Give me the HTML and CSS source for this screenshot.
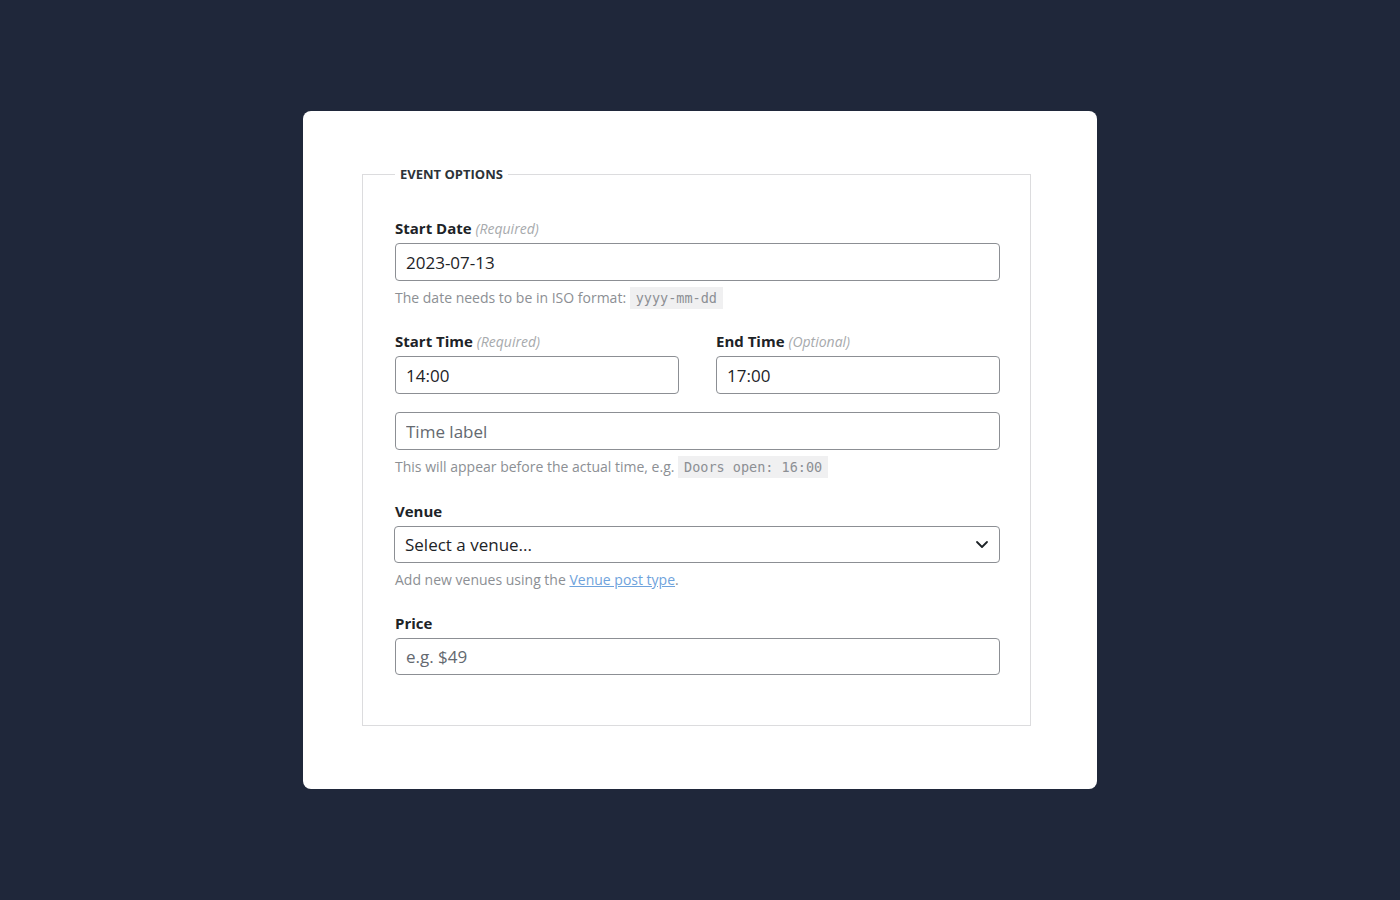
FILE: index.html
```html
<!DOCTYPE html>
<html lang="en">
<head>
  <meta charset="UTF-8">
  <title>Event Options</title>
  <link rel="stylesheet" href="styles.css">
</head>
<body>
  <div class="card">
    <fieldset class="options">
      <legend>Event Options</legend>

      <div class="field">
        <label for="startDate">Start Date <em>(Required)</em></label>
        <input type="text" id="startDate" value="2023-07-13">
        <p class="help">The date needs to be in ISO format: <code>yyyy-mm-dd</code></p>
      </div>

      <div class="row">
        <div class="field">
          <label for="startTime">Start Time <em>(Required)</em></label>
          <input type="text" id="startTime" value="14:00">
        </div>
        <div class="field">
          <label for="endTime">End Time <em>(Optional)</em></label>
          <input type="text" id="endTime" value="17:00">
        </div>
      </div>

      <div class="field">
        <input type="text" id="timeLabel" placeholder="Time label">
        <p class="help">This will appear before the actual time, e.g. <code>Doors open: 16:00</code></p>
      </div>

      <div class="field venue">
        <label for="venue">Venue</label>
        <div class="select-wrap">
          <select id="venue">
            <option>Select a venue...</option>
          </select>
          <svg class="chevron" width="14" height="14" viewBox="0 0 14 14" fill="none" stroke="#1d2327" stroke-width="1.8" stroke-linecap="round" stroke-linejoin="round"><path d="M2 5l5 5 5-5"/></svg>
        </div>
        <p class="help">Add new venues using the <a href="#">Venue post type</a>.</p>
      </div>

      <div class="field last">
        <label for="price">Price</label>
        <input type="text" id="price" placeholder="e.g. $49">
      </div>
    </fieldset>
  </div>
</body>
</html>
```

FILE: styles.css
```css
body {
  margin: 0;
  background-color: #1f273a;
  font-family: 'Open Sans', 'Noto Sans', sans-serif;
  color: #1d2327;
  display: flex;
  justify-content: center;
  padding-top: 111px;
}
.card {
  width: 794px;
  box-sizing: border-box;
  background-color: #fff;
  border-radius: 8px;
  padding: 53px 66px 63px 59px;
}
.options {
  margin: 0;
  border: 1px solid #dcdcde;
  padding: 34px 30px 50px 32px;
}
legend {
  font-size: 13px;
  font-weight: 700;
  text-transform: uppercase;
  color: #2c3338;
  padding: 0 5px;
  line-height: 20px;
}
.field {
  margin-bottom: 22px;
}
.field.venue {
  margin-top: 23px;
}
.field.venue label,
.field.last label {
  margin-bottom: 5px;
}
.field.last {
  margin-bottom: 0;
}
label {
  display: block;
  font-size: 15px;
  font-weight: 700;
  color: #1d2327;
  line-height: 20px;
  margin-bottom: 4px;
}
label em {
  font-weight: 400;
  color: #a7aaad;
  font-size: 14px;
}
input, select {
  display: block;
  width: 100%;
  box-sizing: border-box;
  height: 38px;
  padding: 0 10px;
  border: 1px solid #8c8f94;
  border-radius: 4px;
  font-family: inherit;
  font-size: 17px;
  color: #1d2327;
  background-color: #fff;
  margin: 0;
}
input::placeholder {
  color: #646970;
}
select {
  appearance: none;
  -webkit-appearance: none;
  height: 37px;
  padding-left: 10px;
}
#price {
  height: 37px;
}
.select-wrap {
  position: relative;
  margin-left: -1px;
}
.chevron {
  position: absolute;
  right: 11px;
  top: 11px;
  pointer-events: none;
}
.help {
  margin: 6px 0 0;
  font-size: 14px;
  color: #8c8f94;
  line-height: 22px;
}
code {
  font-family: 'DejaVu Sans Mono', 'Liberation Mono', monospace;
  font-size: 13.5px;
  background-color: #f0f0f1;
  color: #8c8f94;
  padding: 3px 6px;
}
a {
  color: #6fa3dc;
}
.row {
  display: grid;
  grid-template-columns: 1fr 1fr;
  column-gap: 37px;
  margin-bottom: 18px;
}
.row .field {
  margin-bottom: 0;
}
```
